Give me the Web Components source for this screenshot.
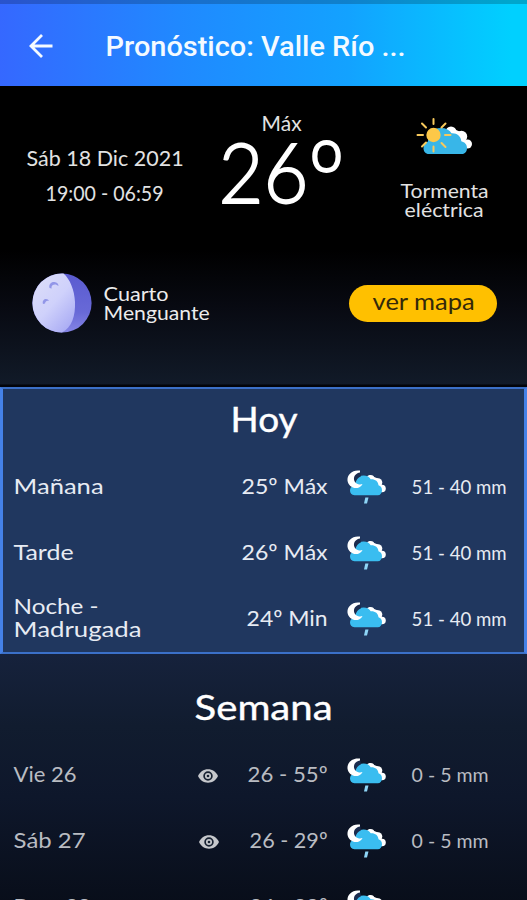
<!DOCTYPE html>
<html lang="es"><head><meta charset="utf-8"><title>Pronóstico</title>
<style>
html,body{margin:0;background:#0a101e}
body{width:527px;height:900px;overflow:hidden;font-family:Lato,"Open Sans",sans-serif}
</style></head><body><forecast-app></forecast-app>
<script>
const define=(name,html,ready)=>customElements.define(name,class extends HTMLElement{
  connectedCallback(){
    if(this.shadowRoot)return;
    const r=this.attachShadow({mode:'open'});
    r.innerHTML=html;
    if(ready)ready.call(this,r);
  }
});

// One line of text stretched to the width "w" at font size "s".
define('fit-text',`<style>:host{display:block;white-space:pre;flex:none;text-align:left}span{display:inline-block;transform-origin:0 50%}</style><span><slot></slot></span>`,function(r){
  const w=+this.getAttribute('w'),sp=r.querySelector('span');
  this.style.fontSize=this.getAttribute('s')+'px';
  this.style.width=w+'px';
  const nat=sp.getBoundingClientRect().width;
  sp.style.transform=`translateX(-.4px) scaleX(${(w+1)/nat})`;
});

define('top-bar',`<style>
:host{display:flex;box-sizing:border-box;height:86px;align-items:center;padding:4px 0 0 28px;border-top:4px solid #0003;background:linear-gradient(90deg,#3568ff 0,#2089ff 34%,#13a2ff 66%,#00d0ff 97%) border-box;color:#f4faff;font:500 28px/34px Roboto,sans-serif}
svg{width:26px;height:26px;margin:-3px 52px 0 0;flex:none}</style>
<svg viewBox="0 0 26 26" fill="none" stroke="#f4faff" stroke-width="2.800"><path d="M24.500 13H3M14 2 3 13l11 11"/></svg><slot></slot>`);

define('sun-cloud',`<style>:host{display:block;width:56px;height:40px}svg{display:block}</style>
<svg width="56" height="40" viewBox="0 0 56 40"><g fill="#fff"><circle cx="35" cy="14" r="5.500"/><circle cx="45.500" cy="18.500" r="5.700"/><circle cx="51.500" cy="26" r="4.500"/><path d="M35 10l10 4 6 14H35z"/></g>
<path fill="#38b6e8" d="M13 36c-3.600 0-5.500-2.600-5.500-6 0-3 1.800-5.500 4.500-6.500C12 16 16 10 25 10c5 0 8.500 2 10.500 5.200 5.500-.4 9.500 3 9.800 8C48.800 24 51 26.500 51 30c0 3.500-2 6-5 6z"/>
<g stroke="#f7c95c" stroke-width="2" stroke-linecap="round"><path d="M17.500 1v5M17.500 28.500v5M1.500 17h5.500M29 17h5.500M6 5.500l4 4M25.500 9.500l4-4M6 28.500l4-4M25.500 25l4 4"/></g><circle cx="17.500" cy="17" r="7.200" fill="#fdc848"/></svg>`);

define('rain-cloud',`<style>:host{display:block;width:40px;height:35px}svg{display:block}</style>
<svg width="40" height="35" viewBox="0 0 40 35"><g fill="#fff"><circle cx="23.500" cy="9" r="4"/><circle cx="31" cy="12.500" r="4.300"/><circle cx="35" cy="18.500" r="3.800"/><path d="M22 5l9 3.500 4 7-3 6H22z"/></g>
<path fill="#3abdf0" d="M7.500 25.200c-3 0-4.500-2-4.500-4.700 0-2.500 1.500-4.300 4.200-5C7 9 11 5.500 16.500 5.500c3.500 0 6 1.500 7.200 3.800 4.300-.3 7.500 2 7.800 6 2.200.6 3.500 2.500 3.500 4.900 0 2.900-1.700 5-4.200 5z"/>
<path fill="#1c2c4e" d="M13 1.500C9 2.500 6.200 6 6.600 9.500c.3 1.800.9 2.800 1.900 3.500.6-3 2.500-5.500 5.500-6.800z"/>
<path fill="#fff" d="M13 .6C5-.6 0 5 .5 10.500 1 16 7 19.500 12 17.500c1.600-.6 2.900-1.800 3.500-3.400-4 1.300-8-.9-8.500-4.600C6.600 6 9 3 13 2.400z"/>
<path fill="#8ed5f6" d="M18.300 27.500h3.200l-1.500 6h-3z"/></svg>`);

define('moon-phase',`<style>:host{display:block;width:60px;height:60px}svg{display:block}</style>
<svg width="60" height="60" viewBox="0 0 60 60"><defs><linearGradient id="l" x1="0" y1="0" x2=".8" y2="1"><stop stop-color="#dedff8"/><stop offset=".55" stop-color="#cfd1fb"/><stop offset="1" stop-color="#a9abf4"/></linearGradient><linearGradient id="d" x1="0" y1="0" x2="0" y2="1"><stop stop-color="#5a5bd0"/><stop offset=".65" stop-color="#6869d7"/><stop offset="1" stop-color="#8585e5"/></linearGradient></defs>
<circle cx="30" cy="30" r="29.600" fill="url(#d)"/><path fill="url(#l)" d="M30 .4A29.600 29.600 0 0 0 30 59.600C40 54 43.500 43 43 29 42.500 17 38 6 31.500.4z"/>
<path fill="#9296e8" d="M17.500 15c-1-4 2-6.500 5-6 2.500.3 4 2 4 4-2-2-4.500-2-6-.8-1 .8-1.200 2-.8 3.300zM11 31c-1-3 1-5 3-5 1.500 0 2.500.8 3 2-2-.8-3.500 0-4 2.500z"/></svg>`);

define('eye-icon',`<style>:host{display:block}svg{display:block}</style>
<svg width="20" height="14" viewBox="0 0 20 14"><path fill="#c6c8cc" d="M0 7C2 2.800 5.500.3 10 .3S18 2.800 20 7c-2 4.200-5.500 6.700-10 6.700S2 11.200 0 7z"/><circle cx="10" cy="7" r="3.900" fill="none" stroke="#172131" stroke-width="1.700"/><circle cx="10" cy="7" r="1.300" fill="#172131"/></svg>`);

define('pill-button',`<style>:host{display:flex;width:148px;height:37px;border-radius:19px;background:#ffc000;color:#33290a;align-items:center;justify-content:center;line-height:30px;box-sizing:border-box;padding-bottom:5px}</style><slot></slot>`);

define('current-weather',`<style>
:host{display:grid;grid-template-columns:209px 145px 173px;height:164px;color:#e2e2e2}
div{display:flex;flex-direction:column;align-items:center}
.date{padding-top:58px;gap:7px;line-height:28px}
.deg{padding-top:24px;line-height:26px}
.big{font-weight:300;color:#fff;line-height:70px;display:flex;flex-direction:row;align-items:flex-start;-webkit-text-stroke:1.800px #fff}
.big fit-text+fit-text{margin-top:4px}
.state{padding:32px 0 0 7px;line-height:19px}
sun-cloud{margin-bottom:23px}</style>
<div class="date"><fit-text s="22" w="156">Sáb 18 Dic 2021</fit-text><fit-text s="22" w="117">19:00 - 06:59</fit-text></div>
<div class="deg"><fit-text s="20.500" w="39">Máx</fit-text><div class="big"><fit-text s="83" w="89">26</fit-text><fit-text s="104" w="37">º</fit-text></div></div>
<div class="state"><sun-cloud></sun-cloud><fit-text s="19" w="87">Tormenta</fit-text><fit-text s="19" w="78">eléctrica</fit-text></div>`);

define('moon-row',`<style>:host{display:flex;height:137px;box-sizing:border-box;padding:23px 30px 0 32px;align-items:flex-start;color:#ececec;background:linear-gradient(#000,#080a12 42%,#111a28 97.500%,#02040a 98.800%)}
.name{line-height:19px;padding:11px 0 0 12px;flex:1}pill-button{margin-top:12px}</style>
<moon-phase></moon-phase><div class="name"><fit-text s="19" w="64">Cuarto</fit-text><fit-text s="19" w="105">Menguante</fit-text></div><pill-button><fit-text s="23" w="101">ver mapa</fit-text></pill-button>`);

define('forecast-row',`<style>:host{display:grid;grid-template-columns:184px 50px 79px 20px 65px 1fr;height:66px;align-items:center;line-height:23px}
.t{display:flex;justify-content:flex-end}.t{margin-top:-4px}.l{margin-top:-2px}.mm{margin-top:-1px}.i{margin-top:0}.e{padding-top:2px}</style>
<div class="l"><slot name="label"></slot></div><div class="e"><slot name="eye"></slot></div><div class="t"><slot name="temp"></slot></div><i></i><rain-cloud class="i"></rain-cloud><div class="mm"><slot name="rain"></slot></div>`);

define('forecast-panel',`<style>:host{display:block;box-sizing:border-box;padding-left:14px}
header{display:flex;justify-content:center;line-height:44px;color:#fff;font-weight:400}</style><header><slot name="title"></slot></header><slot></slot>`);

const row=(labels,temp,tw,rain,rw,eye='')=>`<forecast-row><div slot="label">${labels.map(([t,w])=>`<fit-text s="21.500" w="${w}">${t}</fit-text>`).join('')}</div>${eye?`<eye-icon slot="eye" style="margin-left:${eye}px"></eye-icon>`:''}<fit-text slot="temp" s="22" w="${tw}">${temp}</fit-text><fit-text slot="rain" s="19" w="${rw}">${rain}</fit-text></forecast-row>`;

define('forecast-app',`<style>:host{display:block;width:527px;height:900px;overflow:hidden;background:#000}
.today{height:267px;padding:8px 0 0 11px;border:solid #4481e8;border-width:2px 3px;border-top-color:#3b70c8;border-bottom-color:#3b70c8;background:#20375f;color:#e7ebf3}
.today>[slot=title]{margin-left:-11px;-webkit-text-stroke:.4px #fff}
.today>forecast-row:nth-of-type(1){margin-top:13px}
.week{height:260px;padding-top:30px;background:linear-gradient(#16223c,#111c2f 28%,#0e172b 55%,#080d18);color:#b9bcc2}
.week>[slot=title]{margin-left:-14px;-webkit-text-stroke:.4px #fff}
.week>forecast-row:nth-of-type(1){margin-top:14px}</style>
<top-bar><fit-text s="28" w="299">Pronóstico: Valle Río ...</fit-text></top-bar>
<current-weather></current-weather><moon-row></moon-row>
<forecast-panel class="today"><fit-text slot="title" s="34.500" w="66">Hoy</fit-text>
${row([['Mañana',89]],'25º Máx',85,'51 - 40 mm',94)}${row([['Tarde',59]],'26º Máx',85,'51 - 40 mm',94)}${row([['Noche -',84],['Madrugada',127]],'24º Min',80,'51 - 40 mm',94)}</forecast-panel>
<forecast-panel class="week"><fit-text slot="title" s="35" w="137">Semana</fit-text>
${row([['Vie 26',62]],'26 - 55º',79,'0 - 5 mm',76,'0')}${row([['Sáb 27',71]],'26 - 29º',77,'0 - 5 mm',76,'1')}${row([['Dom 28',76]],'26 - 28º',77,'0 - 5 mm',76,'1')}</forecast-panel>`);
</script></body></html>
